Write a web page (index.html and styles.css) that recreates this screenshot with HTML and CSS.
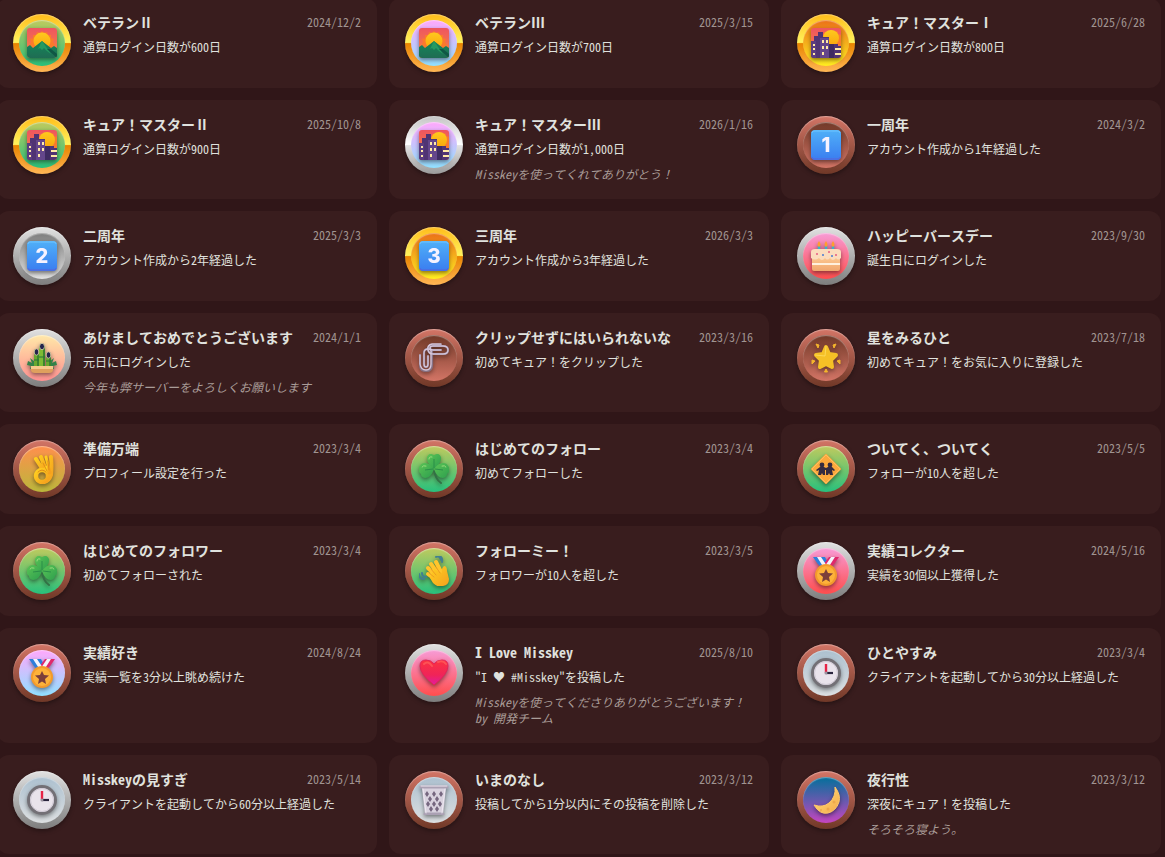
FILE: index.html
```
<!DOCTYPE html>
<html lang="ja">
<head>
<meta charset="utf-8">
<meta name="viewport" content="width=device-width, initial-scale=1">
<title>実績</title>
<link rel="stylesheet" href="styles.css">
</head>
<body>
<svg class="sprite" aria-hidden="true">
  <defs>
    <linearGradient id="gSky" x1="0" y1="0" x2="0" y2="1"><stop offset="0" stop-color="#ee5560"/><stop offset="1" stop-color="#fb8a3a"/></linearGradient>
    <linearGradient id="gSun" x1="0" y1="0" x2="0" y2="1"><stop offset="0" stop-color="#ffc81e"/><stop offset="1" stop-color="#f9a70c"/></linearGradient>
    <linearGradient id="gHill" x1="0" y1="0" x2="0" y2="1"><stop offset="0" stop-color="#14875a"/><stop offset="1" stop-color="#1f6c53"/></linearGradient>
    <linearGradient id="gKey" x1="0" y1="0" x2="0" y2="1"><stop offset="0" stop-color="#50b0f8"/><stop offset="1" stop-color="#3a7df0"/></linearGradient>
    <linearGradient id="gLeaf" x1="0" y1="0" x2="1" y2="1"><stop offset="0" stop-color="#5cc455"/><stop offset="1" stop-color="#2c9e4e"/></linearGradient>
    <linearGradient id="gHand" x1="0" y1="0" x2="1" y2="1"><stop offset="0" stop-color="#ffd020"/><stop offset="1" stop-color="#f5a01e"/></linearGradient>
    <linearGradient id="gHeart" x1="0" y1="0" x2="0" y2="1"><stop offset="0" stop-color="#fb3340"/><stop offset=".6" stop-color="#f02458"/><stop offset="1" stop-color="#e21ba0"/></linearGradient>
    <linearGradient id="gMoon" x1="0" y1="0" x2="1" y2="1"><stop offset="0" stop-color="#ffe37a"/><stop offset="1" stop-color="#f5a94b"/></linearGradient>
    <linearGradient id="gCake" x1="0" y1="0" x2="0" y2="1"><stop offset="0" stop-color="#ffd09a"/><stop offset="1" stop-color="#f0a66d"/></linearGradient>
    <clipPath id="tile"><rect width="30" height="30" rx="3"/></clipPath>
  </defs>

  <symbol id="sunrise" viewBox="0 0 30 30">
    <g clip-path="url(#tile)">
      <rect width="30" height="30" fill="url(#gSky)"/>
      <path d="M15 3l2 2 3-1 1 3 3 0 0 3 3 1-1 3 2 3-2 3H4l-1-3 1-3-1-3 3-1 0-3 3 0 1-3 3 1z" fill="#fb7a2c"/>
      <circle cx="15" cy="13" r="8.500" fill="url(#gSun)"/>
      <path d="M0 19l3-2 3 3 9-7 9 7 3-2 3 2v10H0z" fill="url(#gHill)"/>
      <path d="M15 13l-4 8 2-1 2 2 2-2 3 3 4 3z" fill="#259a61"/>
      <path d="M20 21l4 0 6 5v4z" fill="#105745"/>
    </g>
  </symbol>

  <symbol id="city" viewBox="0 0 30 30">
    <g clip-path="url(#tile)">
      <rect width="30" height="30" fill="url(#gSky)"/>
      <path d="M21 2l2 2 3-1 1 3 3 1v12H12V8l2-4 3 1z" fill="#fb7a2c"/>
      <circle cx="20" cy="10" r="8" fill="url(#gSun)"/>
      <path d="M0 13h3V8h4V4h5v5h6v7h9v2h3v12H0z" fill="#503473"/>
      <path d="M9 10h9v20H9z" fill="#64468b"/>
      <path d="M0 13h5v17H0z" fill="#5b3c80"/>
      <path d="M18 16h5v14h-5z" fill="#3f2b62"/>
      <g fill="#ffe9a6"><path d="M11 12h2v3h-2zM15 12h2v3h-2zM11 18h2v3h-2zM15 18h2v3h-2zM11 24h2v3h-2zM2 16h2v2H2zM2 20h2v2H2zM2 25h2v2H2zM24 20h6v2h-6zM24 25h6v2h-6z"/></g>
    </g>
  </symbol>

  <symbol id="keycap" viewBox="0 0 30 30">
    <rect width="30" height="30" rx="4" fill="url(#gKey)"/>
    <path d="M1 3q0-2 2-2h24q2 0 2 2" fill="none" stroke="#70c4ff"/>
    <path d="M1 27q0 2 2 2h24q2 0 2-2" fill="none" stroke="#5d62d6"/>
  </symbol>

  <symbol id="cake" viewBox="0 0 30 30">
    <path d="M8 5v7M15 5v7M22 5v7" stroke="#35b5cf" stroke-width="2.400"/>
    <path d="M8 0q3 4 0 6q-3-2 0-6M15 0q3 4 0 6q-3-2 0-6M22 0q3 4 0 6q-3-2 0-6" fill="#ff9d2e"/>
    <rect x="1" y="13" width="28" height="17" rx="2" fill="url(#gCake)"/>
    <path d="M1 22h28v2H1z" fill="#fff0dd"/>
    <path d="M0 11q0-3 4-3h22q4 0 4 3v6q-3 3-5 0q-3 4-6 0q-3 3-5 0q-3 4-6 0q-4 3-8 0z" fill="#fbdcbd"/>
    <g fill="#e65d83"><circle cx="6" cy="13" r="1"/><circle cx="18" cy="11" r="1"/><circle cx="25" cy="14" r="1"/></g>
    <g fill="#477bd2"><circle cx="12" cy="14" r="1"/><circle cx="21" cy="15" r="1"/></g>
  </symbol>

  <symbol id="kadomatsu" viewBox="0 0 30 30">
    <path d="M1 18l4 2-2-5 5 4v7H3l1-3-4-1zM29 18l-4 2 2-5-5 4v7h5l-1-3 4-1z" fill="#338249"/>
    <path d="M7 10h5v15H7zM19 12h5v13h-5z" fill="#69a82f"/>
    <path d="M12 3h6v22h-6z" fill="#7dba34"/>
    <path d="M16 3h2v22h-2zM10 10h2v15h-2zM22 12h2v13h-2z" fill="#3c852e"/>
    <path d="M7 17h5M12 14h6M19 18h5" stroke="#27733b"/>
    <g fill="#24234c" stroke="#dfd6a8" stroke-width=".8"><ellipse cx="9.500" cy="9" rx="2.300" ry="3.200"/><ellipse cx="15" cy="3.500" rx="2.500" ry="3.200"/><ellipse cx="21.500" cy="12" rx="2.300" ry="3.200"/></g>
    <path d="M4 23h22v4q0 3-4 3H8q-4 0-4-3z" fill="#dfa05d"/>
    <path d="M4 23h22v3H4z" fill="#f6c98b"/>
  </symbol>

  <symbol id="clips" viewBox="0 0 30 30">
    <g fill="none" stroke-linecap="round">
      <g stroke="#867184" stroke-width="2.200"><path d="M13 8v14q0 6-6 6t-6-6V12M5 19v-9q0-4 4-4t4 4M5 17v4q0 3 2 3t2-3v-8"/><path d="M22 2H14Q8 2 9 7q1 4 5 4h10q5 0 5-4t-5-4H14q-3 0-3 2t3 2h8"/></g>
      <g stroke="#d4c5da" stroke-width="1.400"><path d="M12 8v13q0 6-5 6t-6-6V12M5 19v-9q0-4 4-4t3 4M5 17v4q0 3 2 3t2-3v-8"/><path d="M22 1H13Q8 2 9 7q1 4 5 4h10q5 0 5-4t-5-4H14q-3 0-3 2t3 2h8"/></g>
    </g>
  </symbol>

  <symbol id="star" viewBox="0 0 30 30">
    <path d="M15 4l3 7 7 1-5 5 1 7-6-3-6 3 1-7-5-5 7-1z" fill="#f5c026" stroke="#f5c026" stroke-width="4" stroke-linejoin="round"/>
    <path d="M15 3l-1 10-10-1" stroke="#ffe16a" fill="none" opacity=".7"/>
    <g fill="#f4b42c" stroke="#f4b42c" stroke-linejoin="round"><path d="M5 1l3 1-1 3zM25 1l-3 1 1 3zM1 17l3 1-3 3zM29 17l-3 1 3 3zM15 26l-1.500 3h3z"/></g>
  </symbol>

  <symbol id="okhand" viewBox="0 0 30 30">
    <g fill="none" stroke="url(#gHand)" stroke-linecap="round" stroke-linejoin="round">
      <path d="M9 5l7 11M14 3l5 13" stroke-width="4"/>
      <path d="M24 3q1 10 0 18-2 6-7 7" stroke-width="4"/>
      <circle cx="15" cy="22" r="6" stroke-width="4.500"/>
      <path d="M20 14l2 4" stroke-width="5"/>
      <path d="M19 3l3 12" stroke-width="3"/>
    </g>
    <path d="M11 18q4-4 8 0M16 9l4 8M21 7l1 9" fill="none" stroke="#e08e18" stroke-linecap="round"/>
  </symbol>

  <symbol id="clover" viewBox="0 0 30 30">
    <path d="M15 15q1 10 7 14" stroke="#327145" stroke-width="2" fill="none" stroke-linecap="round"/>
    <g fill="url(#gLeaf)">
      <path d="M15 15Q7 9 8 3q2-5 7-2 5-3 7 2 1 6-7 12z"/>
      <path d="M15 15q-3 9-9 9-4-1-4-4-5-4-1-8 1-3 5-3 5 0 9 6z"/>
      <path d="M15 15q3 9 9 9 4-1 4-4 5-4 1-8-1-3-5-3-5 0-9 6z"/>
    </g>
    <path d="M15 14V5M14 15L6 16M16 15l8 1" stroke="#2b8e49" fill="none"/>
    <path d="M10 5q0-3 3-2M3 13q1-2 4-1M23 12q3-1 4 1" stroke="#9bdf7d" fill="none" stroke-linecap="round"/>
  </symbol>

  <symbol id="crossing" viewBox="0 0 30 30">
    <path d="M15 1l14 14-14 14L1 15z" fill="#fda93c" stroke="#fda93c" stroke-width="2" stroke-linejoin="round"/>
    <path d="M15 1l14 14-14 14L1 15z" fill="none" stroke="#ffbe5f"/>
    <g fill="#352b3f"><circle cx="11" cy="11" r="2.400"/><circle cx="19" cy="11" r="2.400"/><path d="M9 13h4l2 1 2-1h4l3 3-1 1-2-1 1 5h-3l-1-2-1 2h-2v-5h-1v5h-2l-1-2-1 2H7l1-5-2 1-1-1z"/></g>
  </symbol>

  <symbol id="wave" viewBox="0 0 30 30">
    <path d="M17 1q3-2 5 3M20 0q4 1 3 6M0 18q0 5 5 5M3 17q0 4 4 4" fill="none" stroke="#427f91" stroke-width="2" stroke-linecap="round"/>
    <path d="M12 8l8 11M9 12l9 9M17 6l6 12M9 18l8 6" stroke="#ffc52c" stroke-width="4" stroke-linecap="round"/>
    <path d="M15 13l8 4q-1-5 2-7 3 0 3 5l2 8q0 6-6 7-5 2-10-3l-3-5z" fill="url(#gHand)"/>
    <path d="M12 13l5 6M10 17l5 4M17 11l4 6" stroke="#ed9c20" fill="none" stroke-linecap="round"/>
  </symbol>

  <symbol id="medal" viewBox="0 0 30 30">
    <path d="M2 1h12l4 8-6 4q-6-5-10-12z" fill="#2d7edb"/>
    <path d="M28 1H18l-6 8 6 4q6-5 10-12z" fill="#e0286c"/>
    <path d="M6 1h4l6 9-3 2zM24 1h-4l-6 9 3 2z" fill="#f4f4fb"/>
    <circle cx="15" cy="19" r="11" fill="#f39a2c"/><circle cx="15" cy="19" r="9" fill="#fdb23a"/>
    <path d="M15 13l2 4 5 .5-4 3.500 1 5-4-2.500-4 2.500 1-5-4-3.500 5-.5z" fill="#7b3e3a"/>
  </symbol>

  <symbol id="heart" viewBox="0 0 30 30">
    <path d="M15 27Q1 16 1 8q0-6 6-6 5 0 8 4 3-4 8-4 6 0 6 6 0 8-14 19z" fill="url(#gHeart)" stroke="#e52256" stroke-linejoin="round"/>
    <path d="M5 6q4-4 8 2M19 4q5-2 8 2" stroke="#ff6560" stroke-width="2" fill="none" stroke-linecap="round" opacity=".65"/>
  </symbol>

  <symbol id="clock" viewBox="0 0 30 30">
    <circle cx="15" cy="15" r="13.500" fill="#e9e3eb" stroke="#737076" stroke-width="3"/>
    <circle cx="15" cy="15" r="11.500" fill="none" stroke="#cfc8d4"/>
    <path d="M15 15V6" stroke="#e72346" stroke-width="2.400"/><path d="M15 15h7" stroke="#29233c" stroke-width="2.200"/><circle cx="15" cy="15" r="1.500" fill="#9b929f"/>
  </symbol>

  <symbol id="basket" viewBox="0 0 30 30">
    <path d="M3 3h24l-3 27H6z" fill="#d9d2df"/>
    <g fill="#75667f"><path d="M8 6l2 3-2 3-2-3zM15 6l2 3-2 3-2-3zM22 6l2 3-2 3-2-3zM11 11l2 3-2 3-2-3zM18 11l2 3-2 3-2-3zM9 16l2 3-2 3-2-3zM15 16l2 3-2 3-2-3zM21 16l2 3-2 3-2-3zM12 21l2 3-2 3-2-3zM18 21l2 3-2 3-2-3z"/></g>
    <path d="M2 2h26M6 29h18" stroke="#aaa0b3" stroke-width="3" stroke-linecap="round"/>
    <path d="M2 1h26M4 4l3 24M26 4l-3 24" stroke="#eee8f2" fill="none" stroke-linecap="round"/>
  </symbol>

  <symbol id="moon" viewBox="0 0 30 30">
    <path d="M24 2q6 8 4 15-3 9-11 11-8 2-14-8 9 3 15-2 7-6 6-16z" fill="url(#gMoon)" stroke="#ffc76a" stroke-width="1"/>
    <g fill="#e69b42" opacity=".6"><circle cx="23" cy="17" r="1.500"/><circle cx="17" cy="24" r="1.500"/><circle cx="10" cy="25" r="1"/></g>
  </symbol>
</svg>

<main>
<ul class="achievements">
  <li class="card"><div class="badge gold"><div class="face green"><svg class="icon"><use href="#sunrise"/></svg></div></div><div class="body"><header><h2>ベテランⅡ</h2><time>2024/12/2</time></header><p class="desc">通算ログイン日数が600日</p></div></li>
  <li class="card"><div class="badge gold"><div class="face dream"><svg class="icon"><use href="#sunrise"/></svg></div></div><div class="body"><header><h2>ベテランⅢ</h2><time>2025/3/15</time></header><p class="desc">通算ログイン日数が700日</p></div></li>
  <li class="card"><div class="badge gold"><div class="face amber"><svg class="icon"><use href="#city"/></svg></div></div><div class="body"><header><h2>キュア！マスターⅠ</h2><time>2025/6/28</time></header><p class="desc">通算ログイン日数が800日</p></div></li>

  <li class="card"><div class="badge gold"><div class="face green"><svg class="icon"><use href="#city"/></svg></div></div><div class="body"><header><h2>キュア！マスターⅡ</h2><time>2025/10/8</time></header><p class="desc">通算ログイン日数が900日</p></div></li>
  <li class="card"><div class="badge platinum"><div class="face dream"><svg class="icon"><use href="#city"/></svg></div></div><div class="body"><header><h2>キュア！マスターⅢ</h2><time>2026/1/16</time></header><p class="desc">通算ログイン日数が1,000日</p><p class="note">Misskeyを使ってくれてありがとう！</p></div></li>
  <li class="card"><div class="badge bronze"><div class="face copper"><svg class="icon" viewBox="0 0 30 30"><use href="#keycap"/><text class="digit" x="15" y="22">1</text></svg></div></div><div class="body"><header><h2>一周年</h2><time>2024/3/2</time></header><p class="desc">アカウント作成から1年経過した</p></div></li>

  <li class="card"><div class="badge silver"><div class="face steel"><svg class="icon" viewBox="0 0 30 30"><use href="#keycap"/><text class="digit" x="15" y="22">2</text></svg></div></div><div class="body"><header><h2>二周年</h2><time>2025/3/3</time></header><p class="desc">アカウント作成から2年経過した</p></div></li>
  <li class="card"><div class="badge gold"><div class="face amber"><svg class="icon" viewBox="0 0 30 30"><use href="#keycap"/><text class="digit" x="15" y="22">3</text></svg></div></div><div class="body"><header><h2>三周年</h2><time>2026/3/3</time></header><p class="desc">アカウント作成から3年経過した</p></div></li>
  <li class="card"><div class="badge silver"><div class="face pink"><svg class="icon"><use href="#cake"/></svg></div></div><div class="body"><header><h2>ハッピーバースデー</h2><time>2023/9/30</time></header><p class="desc">誕生日にログインした</p></div></li>

  <li class="card"><div class="badge silver"><div class="face peach"><svg class="icon"><use href="#kadomatsu"/></svg></div></div><div class="body"><header><h2>あけましておめでとうございます</h2><time>2024/1/1</time></header><p class="desc">元日にログインした</p><p class="note">今年も弊サーバーをよろしくお願いします</p></div></li>
  <li class="card"><div class="badge bronze"><div class="face copper"><svg class="icon"><use href="#clips"/></svg></div></div><div class="body"><header><h2>クリップせずにはいられないな</h2><time>2023/3/16</time></header><p class="desc">初めてキュア！をクリップした</p></div></li>
  <li class="card"><div class="badge bronze"><div class="face copper"><svg class="icon"><use href="#star"/></svg></div></div><div class="body"><header><h2>星をみるひと</h2><time>2023/7/18</time></header><p class="desc">初めてキュア！をお気に入りに登録した</p></div></li>

  <li class="card"><div class="badge bronze"><div class="face orange"><svg class="icon"><use href="#okhand"/></svg></div></div><div class="body"><header><h2>準備万端</h2><time>2023/3/4</time></header><p class="desc">プロフィール設定を行った</p></div></li>
  <li class="card"><div class="badge bronze"><div class="face green"><svg class="icon"><use href="#clover"/></svg></div></div><div class="body"><header><h2>はじめてのフォロー</h2><time>2023/3/4</time></header><p class="desc">初めてフォローした</p></div></li>
  <li class="card"><div class="badge bronze"><div class="face green"><svg class="icon"><use href="#crossing"/></svg></div></div><div class="body"><header><h2>ついてく、ついてく</h2><time>2023/5/5</time></header><p class="desc">フォローが10人を超した</p></div></li>

  <li class="card"><div class="badge bronze"><div class="face green"><svg class="icon"><use href="#clover"/></svg></div></div><div class="body"><header><h2>はじめてのフォロワー</h2><time>2023/3/4</time></header><p class="desc">初めてフォローされた</p></div></li>
  <li class="card"><div class="badge bronze"><div class="face green"><svg class="icon"><use href="#wave"/></svg></div></div><div class="body"><header><h2>フォローミー！</h2><time>2023/3/5</time></header><p class="desc">フォロワーが10人を超した</p></div></li>
  <li class="card"><div class="badge silver"><div class="face pink"><svg class="icon"><use href="#medal"/></svg></div></div><div class="body"><header><h2>実績コレクター</h2><time>2024/5/16</time></header><p class="desc">実績を30個以上獲得した</p></div></li>

  <li class="card"><div class="badge bronze"><div class="face dream"><svg class="icon"><use href="#medal"/></svg></div></div><div class="body"><header><h2>実績好き</h2><time>2024/8/24</time></header><p class="desc">実績一覧を3分以上眺め続けた</p></div></li>
  <li class="card"><div class="badge silver"><div class="face pink"><svg class="icon"><use href="#heart"/></svg></div></div><div class="body"><header><h2>I Love Misskey</h2><time>2025/8/10</time></header><p class="desc">"I ♥ #Misskey"を投稿した</p><p class="note">Misskeyを使ってくださりありがとうございます！ by 開発チーム</p></div></li>
  <li class="card"><div class="badge bronze"><div class="face mist"><svg class="icon"><use href="#clock"/></svg></div></div><div class="body"><header><h2>ひとやすみ</h2><time>2023/3/4</time></header><p class="desc">クライアントを起動してから30分以上経過した</p></div></li>

  <li class="card"><div class="badge silver"><div class="face mist"><svg class="icon"><use href="#clock"/></svg></div></div><div class="body"><header><h2>Misskeyの見すぎ</h2><time>2023/5/14</time></header><p class="desc">クライアントを起動してから60分以上経過した</p></div></li>
  <li class="card"><div class="badge bronze"><div class="face mist"><svg class="icon"><use href="#basket"/></svg></div></div><div class="body"><header><h2>いまのなし</h2><time>2023/3/12</time></header><p class="desc">投稿してから1分以内にその投稿を削除した</p></div></li>
  <li class="card"><div class="badge bronze"><div class="face night"><svg class="icon"><use href="#moon"/></svg></div></div><div class="body"><header><h2>夜行性</h2><time>2023/3/12</time></header><p class="desc">深夜にキュア！を投稿した</p><p class="note">そろそろ寝よう。</p></div></li>
</ul>
</main>
</body>
</html>
```

FILE: styles.css
```
* {
  box-sizing: border-box;
}

body {
  margin: 0;
  overflow: hidden;
  background: #301618;
  color: #e0e2de;
  font-family: "Noto Sans Mono CJK JP", "Noto Sans CJK JP", sans-serif;
  font-size: 12px;
  line-height: 16px;
}

.sprite {
  position: absolute;
  width: 0;
  height: 0;
}

.achievements {
  display: grid;
  grid-template-columns: repeat(3, minmax(0, 1fr));
  gap: 12px;
  margin: -2px 4px 0 -3px;
  padding: 0;
  list-style: none;
}

.card {
  display: flex;
  align-items: flex-start;
  gap: 12px;
  padding: 16px;
  border-radius: 12px;
  background: #391d1e;
}

.badge {
  flex: none;
  display: grid;
  place-items: center;
  width: 58px;
  height: 58px;
  border-radius: 50%;
  box-shadow: 0 2px 4px rgba(0, 0, 0, 0.35), inset 0 1px 1px rgba(255, 255, 255, 0.35);
}

.face {
  display: grid;
  place-items: center;
  width: 46px;
  height: 46px;
  border-radius: 50%;
  box-shadow: inset 0 1px 1px rgba(255, 255, 255, 0.4);
}

.icon {
  width: 30px;
  height: 30px;
  overflow: visible;
  filter: drop-shadow(0 2px 2px rgba(0, 0, 0, 0.45));
}

.digit {
  fill: #f6f2ff;
  font-family: Inter, sans-serif;
  font-size: 20px;
  font-weight: 800;
  text-anchor: middle;
}

.bronze { background: linear-gradient(0deg, #703827, #d37566); }
.silver { background: linear-gradient(0deg, #7d7d7d, #e1e1e1); }
.gold { background: linear-gradient(0deg, #ffb655 0%, #e98500 49%, #fff35d 51%, #ffbb19 100%); }
.platinum { background: linear-gradient(0deg, #9a9a9a 0%, #e2e2e2 49%, #fff 51%, #c3c3c3 100%); }

.copper { background: linear-gradient(0deg, #d37566, #703827); }
.steel { background: linear-gradient(0deg, #e1e1e1, #7d7d7d); }
.amber { background: linear-gradient(0deg, #ffee20, #eb7018); }
.green { background: linear-gradient(0deg, #28c07c, #bfca5e); }
.dream { background: linear-gradient(0deg, #90e0ff, #ffa8fc); }
.pink { background: linear-gradient(0deg, #ff4d4d, #f79bd6); }
.peach { background: linear-gradient(0deg, #ff9090, #ffe8a8); }
.orange { background: linear-gradient(0deg, #bbb73b, #ff8f4d); }
.mist { background: linear-gradient(0deg, #dcdfe1, #acc0cf); }
.night { background: linear-gradient(0deg, #c545c0, #02709b); }

.body {
  flex: 1;
  min-width: 0;
  padding-bottom: 1px;
}

header {
  display: flex;
  align-items: flex-start;
  justify-content: space-between;
  gap: 8px;
}

h2 {
  margin: 0;
  font-size: 14px;
  font-weight: 700;
  line-height: 16px;
}

time {
  color: #a09491;
}

.desc {
  margin: 8px 0 0;
  line-height: 18px;
}

.note {
  margin: 8px 0 0;
  color: #a99c98;
  font-style: italic;
}
```
